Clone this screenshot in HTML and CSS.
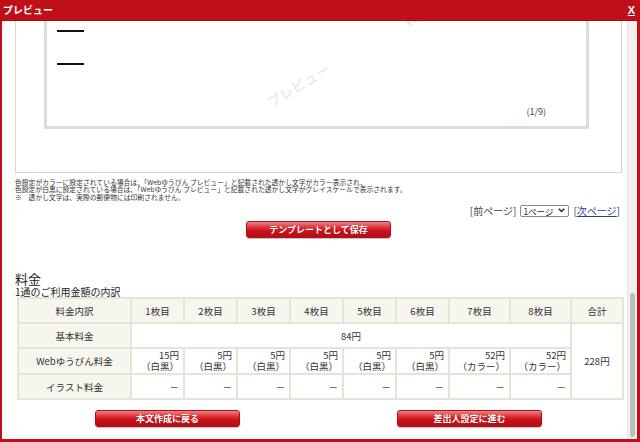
FILE: index.html
```html
<!DOCTYPE html>
<html lang="ja">
<head>
  <meta charset="UTF-8" />
  <title>プレビュー</title>
  <link rel="stylesheet" href="styles.css">
</head>
<body>

  <div class="window">
    <div class="title-bar">
      <span class="title">プレビュー</span>
      <a class="close" href="#">X</a>
    </div>

    <div class="body">
      <div class="content">

        <div class="preview-box">
          <div class="page">
            <div class="dash"></div>
            <div class="dash dash-second"></div>
            <span class="watermark wm-main">プレビュー</span>
            <span class="watermark wm-top">Webゆうびん</span>
            <div class="page-no">(1/9)</div>
          </div>
        </div>

        <div class="notes">
          <p>色設定がカラーに設定されている場合は、「Webゆうびん プレビュー」と記載された透かし文字がカラー表示され、</p>
          <p>色設定が白黒に設定されている場合は、「Webゆうびん プレビュー」と記載された透かし文字がグレイスケールで表示されます。</p>
          <p>※　透かし文字は、実際の郵便物には印刷されません。</p>
        </div>

        <div class="pager">
          <span class="prev">[前ページ]</span>
          <div class="page-select">
            <span>1ページ</span>
            <svg width="7" height="5" viewBox="0 0 7 5"><path d="M0.8 0.8 L3.5 3.6 L6.2 0.8" fill="none" stroke="#222" stroke-width="1.4"/></svg>
          </div>
          <span class="next">[<a href="#">次ページ</a>]</span>
        </div>

        <div class="center-row">
          <button type="button" class="red-btn">テンプレートとして保存</button>
        </div>

        <h2>料金</h2>
        <p class="sub">1通のご利用金額の内訳</p>

        <table class="fee-table">
          <colgroup>
            <col class="c-label">
            <col class="c-n"><col class="c-n"><col class="c-n">
            <col class="c-n"><col class="c-n"><col class="c-n">
            <col class="c-w"><col class="c-w">
            <col class="c-total">
          </colgroup>
          <tr class="row-head">
            <th>料金内訳</th>
            <th>1枚目</th><th>2枚目</th><th>3枚目</th><th>4枚目</th>
            <th>5枚目</th><th>6枚目</th><th>7枚目</th><th>8枚目</th>
            <th>合計</th>
          </tr>
          <tr class="row-base">
            <th>基本料金</th>
            <td colspan="8" class="center">84円</td>
            <td rowspan="3" class="center total">228円</td>
          </tr>
          <tr class="row-web">
            <th>Webゆうびん料金</th>
            <td class="num">15円<br>（白黒）</td>
            <td class="num">5円<br>（白黒）</td>
            <td class="num">5円<br>（白黒）</td>
            <td class="num">5円<br>（白黒）</td>
            <td class="num">5円<br>（白黒）</td>
            <td class="num">5円<br>（白黒）</td>
            <td class="num">52円<br>（カラー）</td>
            <td class="num">52円<br>（カラー）</td>
          </tr>
          <tr class="row-illust">
            <th>イラスト料金</th>
            <td class="num">－</td>
            <td class="num">－</td>
            <td class="num">－</td>
            <td class="num">－</td>
            <td class="num">－</td>
            <td class="num">－</td>
            <td class="num">－</td>
            <td class="num">－</td>
          </tr>
        </table>

        <div class="bottom-buttons">
          <button type="button" class="red-btn">本文作成に戻る</button>
          <button type="button" class="red-btn">差出人設定に進む</button>
        </div>

      </div>

      <div class="scrollbar">
        <div class="thumb"></div>
      </div>
    </div>
  </div>

</body>
</html>
```

FILE: styles.css
```css
* {
  margin: 0;
  padding: 0;
  box-sizing: border-box;
}

body {
  width: 640px;
  height: 442px;
  background: #fff;
  font-family: "Noto Sans CJK JP", "DejaVu Sans", sans-serif;
  color: #333;
  overflow: hidden;
}

.window {
  width: 640px;
  height: 442px;
  display: flex;
  flex-direction: column;
}

.title-bar {
  height: 21px;
  background-color: #c10f1a;
  border-bottom: 1px solid #a80c16;
  display: flex;
  align-items: center;
  justify-content: space-between;
  padding: 0 5px 0 3px;
}

.title {
  color: #fff;
  font-weight: bold;
  font-size: 10px;
  line-height: 12px;
}

.close {
  color: #fff;
  font-weight: bold;
  font-size: 11px;
  line-height: 12px;
  text-decoration: underline;
  font-family: "Liberation Sans", sans-serif;
}

.body {
  flex: 1;
  display: flex;
  border-left: 2px solid #c10f1a;
  border-right: 3px solid #c10f1a;
  border-bottom: 3px solid #c10f1a;
  overflow: hidden;
}

.content {
  flex: 1;
  overflow: hidden;
  padding: 0 5px 0 13px;
}

/* preview frame */
.preview-box {
  height: 152px;
  border-left: 1px solid #d6d6d6;
  border-right: 1px solid #d6d6d6;
  border-bottom: 1px solid #d6d6d6;
}

.page {
  position: relative;
  width: 545px;
  height: 108px;
  margin-left: 28px;
  border: 3px solid #dcdcdc;
  border-top: none;
  display: flex;
  flex-direction: column;
}

.dash {
  width: 27px;
  height: 2px;
  background: #111;
  margin: 9px 0 0 10px;
}

.dash-second {
  margin-top: 31px;
}

.page-no {
  margin-top: auto;
  margin-bottom: 9px;
  margin-right: 40px;
  align-self: flex-end;
  font-size: 9px;
  line-height: 11px;
  color: #444;
}

.watermark {
  position: absolute;
  font-size: 14px;
  line-height: 14px;
  color: #e4e4e4;
  white-space: nowrap;
  transform: rotate(-31deg);
}

.wm-main {
  left: 216px;
  top: 57px;
}

.wm-top {
  left: 352px;
  top: -28px;
}

/* notes */
.notes {
  margin-top: 6px;
  font-size: 6.8px;
  line-height: 7.4px;
  color: #333;
  white-space: nowrap;
}

.pager {
  margin-top: 3px;
  display: flex;
  justify-content: flex-end;
  align-items: center;
  gap: 4px;
  font-size: 10px;
  line-height: 13px;
  height: 13px;
  margin-right: 2px;
}

.prev {
  color: #444;
}

.page-select {
  display: flex;
  align-items: center;
  justify-content: space-between;
  width: 49px;
  height: 12px;
  padding: 0 3px 0 2px;
  border: 1px solid #8a8a8a;
  border-radius: 2px;
  background: #fff;
  color: #222;
  font-size: 8.5px;
  line-height: 10px;
}

.next,
.next a {
  color: #1f3fa0;
}

.center-row {
  margin-top: 4px;
  display: flex;
  justify-content: center;
}

.red-btn {
  width: 145px;
  height: 17px;
  border: 1px solid #b10e18;
  border-radius: 3px;
  background: linear-gradient(#ee8286 0%, #db2a31 40%, #c8121b 60%, #b30e17 100%);
  box-shadow: 0 1px 1px rgba(0, 0, 0, 0.25);
  color: #fff;
  font-family: "Noto Sans CJK JP", sans-serif;
  font-weight: bold;
  font-size: 9px;
  line-height: 15px;
  text-shadow: 0 0 1px rgba(90, 0, 0, 0.6);
  cursor: pointer;
}

h2 {
  margin-top: 33px;
  font-size: 13px;
  line-height: 15px;
  font-weight: normal;
  color: #222;
}

.sub {
  font-size: 10px;
  line-height: 11px;
  color: #222;
}

/* fee table */
.fee-table {
  width: 605px;
  margin-left: 2px;
  border-collapse: collapse;
  table-layout: fixed;
  font-size: 9.5px;
  color: #333;
}

.c-label { width: 113px; }
.c-n { width: 53px; }
.c-w { width: 61px; }
.c-total { width: 52px; }

.fee-table th,
.fee-table td {
  border: 2px solid #e6e4d6;
  font-weight: normal;
  vertical-align: middle;
}

.fee-table th {
  background-color: #f6f5ee;
  text-align: center;
}

.row-head th,
.row-base th,
.row-base td,
.row-illust th,
.row-illust td {
  height: 25px;
  line-height: 12px;
}

.row-web th,
.row-web td {
  height: 26px;
  line-height: 11px;
}

.fee-table td {
  background: #fff;
}

.center {
  text-align: center;
}

.num {
  text-align: right;
  padding-right: 4px;
  white-space: nowrap;
}

.bottom-buttons {
  margin-top: 10px;
  display: flex;
  justify-content: center;
  gap: 157px;
}

/* scrollbar */
.scrollbar {
  width: 10px;
  background: #f1f1f1;
  border-left: 1px solid #e4e4e4;
}

.thumb {
  width: 5px;
  height: 144px;
  margin: 272px 0 0 2px;
  background: #bdbdbd;
  border-radius: 3px;
}
```
